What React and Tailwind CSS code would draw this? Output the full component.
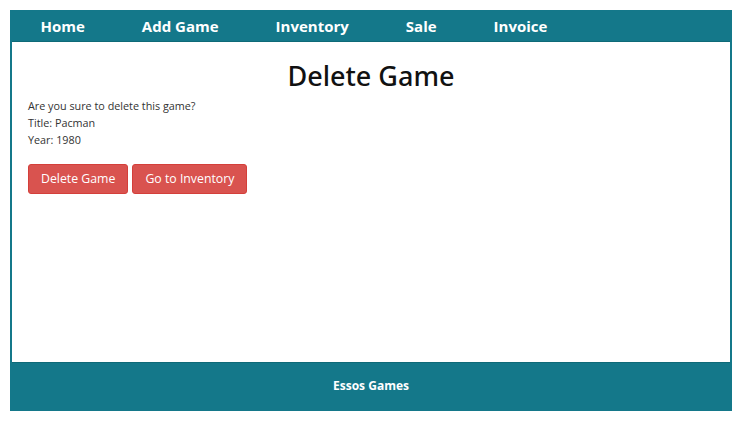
export default function App() {
  const font = { fontFamily: '"Open Sans", "Noto Sans", sans-serif' };
  return (
    <div className="w-[750px] h-[433px] bg-white pt-[10px] pl-[10px]" style={font}>
      <div className="w-[722px] h-[401px] border-2 border-t-0 border-[#14788a] flex flex-col box-border">
        <nav className="h-[32px] bg-[#14788a] flex items-center pt-[2px] border-b border-[#0f6a78]">
          {["Home", "Add Game", "Inventory", "Sale", "Invoice"].map((t) => (
            <a key={t} className="px-[28.5px] text-white font-bold text-[15px] leading-none">{t}</a>
          ))}
        </nav>
        <main className="flex-1 bg-white px-[16px]">
          <h1 className="text-center text-[27px] leading-none font-medium text-[#111] mt-[20px] mb-[8px] font-['Noto_Sans',sans-serif]">Delete Game</h1>
          <div className="text-[10.8px] leading-[17px] text-[#333]">
            <p>Are you sure to delete this game?</p>
            <p>Title: Pacman</p>
            <p>Year: 1980</p>
          </div>
          <div className="flex gap-[4px] mt-[16px]">
            <button className="h-[30px] px-[12px] bg-[#d9534f] text-white text-[12.3px] rounded-[3px] border border-[#d43f3a]">Delete Game</button>
            <button className="h-[30px] px-[12px] bg-[#d9534f] text-white text-[12.3px] rounded-[3px] border border-[#d43f3a]">Go to Inventory</button>
          </div>
        </main>
        <footer className="h-[47px] bg-[#14788a] flex items-center justify-center border-t border-[#0f6a78]">
          <span className="text-white font-bold text-[12px]">Essos Games</span>
        </footer>
      </div>
    </div>
  );
}
